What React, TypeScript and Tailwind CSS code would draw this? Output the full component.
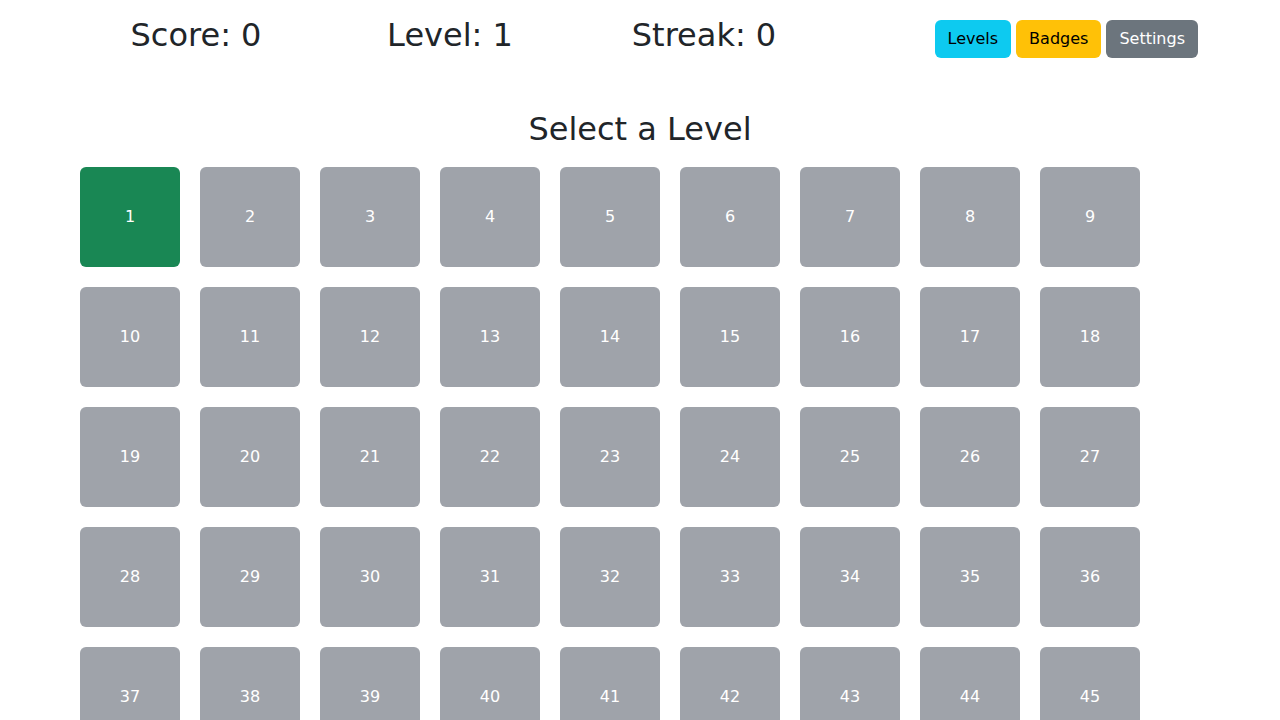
import React, { useState } from 'react';

const levels = Array.from({ length: 54 }, (_, i) => i + 1);

export default function App() {
  const [current, setCurrent] = useState(1);

  return (
    <div className="min-h-screen bg-white text-[#212529]" style={{ fontFamily: '"DejaVu Sans", sans-serif' }}>
      <div className="w-[1140px] mx-auto px-3">
        <div className="flex items-start pt-4">
          <div className="w-[254px] -ml-[13px] text-center text-[32px] leading-[1.2]">Score: 0</div>
          <div className="w-[254px] text-center text-[32px] leading-[1.2]">Level: {current}</div>
          <div className="w-[254px] text-center text-[32px] leading-[1.2]">Streak: 0</div>
          <div className="ml-auto mt-1 flex gap-[5px] text-base leading-6">
            <button className="px-[13px] py-[7px] rounded-md bg-[#0dcaf0] text-black">Levels</button>
            <button className="px-[13px] py-[7px] rounded-md bg-[#ffc107] text-black">Badges</button>
            <button className="px-[13px] py-[7px] rounded-md bg-[#6c757d] text-white">Settings</button>
          </div>
        </div>

        <h2 className="text-center text-[32px] leading-[1.2] mt-[52px] mb-[9px]">Select a Level</h2>

        <div className="flex flex-wrap -mx-3">
          {levels.map((n) => (
            <button
              key={n}
              onClick={() => setCurrent(n)}
              className={
                'w-[100px] h-[100px] m-[10px] rounded-md text-base text-white flex items-center justify-center ' +
                (n === current ? 'bg-[#198754]' : 'bg-[#9fa3aa]')
              }
            >
              {n}
            </button>
          ))}
        </div>
      </div>
    </div>
  );
}
